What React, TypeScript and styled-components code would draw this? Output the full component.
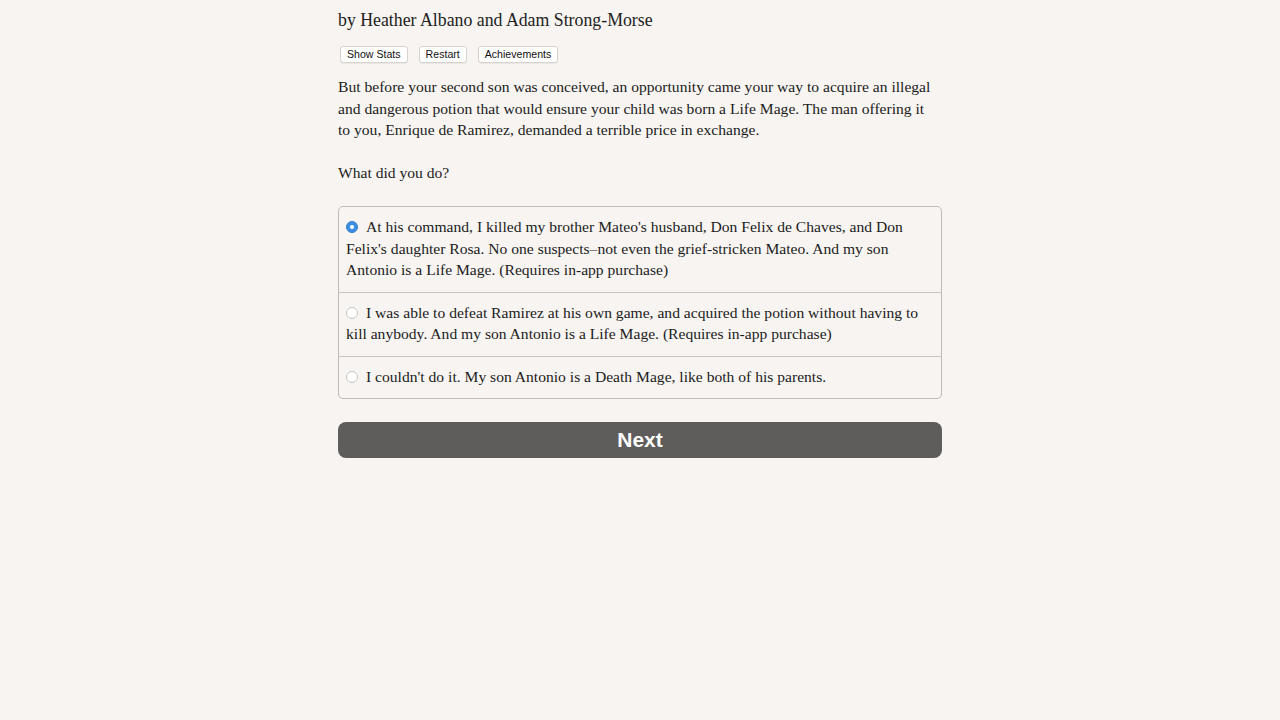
import React, { useState } from "react";
import styled, { createGlobalStyle } from "styled-components";

const Global = createGlobalStyle`
  html, body { margin: 0; padding: 0; background: #f7f4f1; }
  body { font-family: "Liberation Serif", "Times New Roman", serif; color: #1c1c1c; }
`;

const Page = styled.div`
  width: 604px;
  margin: 0 auto;
  padding-top: 9px;
`;

const Title = styled.div`
  font-size: 17.8px;
  line-height: 22px;
  color: #222;
`;

const ButtonRow = styled.div`
  display: flex;
  gap: 11px;
  margin-top: 15px;
  padding-left: 2px;
`;

const SmallButton = styled.button`
  font-family: "Liberation Sans", Arial, sans-serif;
  font-size: 10.6px;
  line-height: 15px;
  height: 17px;
  padding: 0 6px;
  background: #fff;
  border: 1px solid #d6d3cf;
  border-radius: 3px;
  color: #111;
  box-shadow: 0 1px 1px rgba(0,0,0,0.06);
`;

const Para = styled.p`
  font-size: 15.6px;
  line-height: 21.5px;
  margin: 13px 0 0;
  padding-right: 6px;
`;

const Question = styled.p`
  font-size: 15.6px;
  line-height: 21.5px;
  margin: 21px 0 0;
`;

const ChoiceBox = styled.div`
  margin-top: 23px;
  border: 1px solid #bdbab7;
  border-radius: 5px;
  overflow: hidden;
`;

const Choice = styled.label<{ $first?: boolean }>`
  display: block;
  padding: 9px 8px 11px 7px;
  font-size: 15.6px;
  line-height: 21.5px;
  border-top: ${(p) => (p.$first ? "none" : "1px solid #c9c6c3")};
  cursor: pointer;
`;

const Radio = styled.span<{ $checked: boolean }>`
  display: inline-block;
  width: 12px;
  height: 12px;
  box-sizing: border-box;
  border-radius: 50%;
  vertical-align: -1px;
  margin-right: 8px;
  background: ${(p) => (p.$checked ? "#3d8fe0" : "#fff")};
  border: ${(p) => (p.$checked ? "1px solid #2f7fd1" : "1px solid #c8c5c2")};
  position: relative;
  &::after {
    content: "";
    display: ${(p) => (p.$checked ? "block" : "none")};
    position: absolute;
    left: 3px;
    top: 3px;
    width: 4px;
    height: 4px;
    border-radius: 50%;
    background: #fff;
  }
`;

const NextButton = styled.button`
  display: block;
  width: 100%;
  height: 36px;
  margin-top: 23px;
  background: #5f5d5b;
  color: #fff;
  border: none;
  border-radius: 8px;
  font-family: "Liberation Sans", Arial, sans-serif;
  font-weight: bold;
  font-size: 21px;
  line-height: 36px;
  padding: 0;
`;

const choices = [
  "At his command, I killed my brother Mateo's husband, Don Felix de Chaves, and Don Felix's daughter Rosa. No one suspects\u2013not even the grief-stricken Mateo. And my son Antonio is a Life Mage. (Requires in-app purchase)",
  "I was able to defeat Ramirez at his own game, and acquired the potion without having to kill anybody. And my son Antonio is a Life Mage. (Requires in-app purchase)",
  "I couldn't do it. My son Antonio is a Death Mage, like both of his parents.",
];

export default function App() {
  const [sel, setSel] = useState(0);
  return (
    <>
      <Global />
      <Page>
        <Title>by Heather Albano and Adam Strong-Morse</Title>
        <ButtonRow>
          <SmallButton>Show Stats</SmallButton>
          <SmallButton>Restart</SmallButton>
          <SmallButton>Achievements</SmallButton>
        </ButtonRow>
        <Para>
          But before your second son was conceived, an opportunity came your way to acquire an illegal and
          dangerous potion that would ensure your child was born a Life Mage. The man offering it to you,
          Enrique de Ramirez, demanded a terrible price in exchange.
        </Para>
        <Question>What did you do?</Question>
        <ChoiceBox>
          {choices.map((c, i) => (
            <Choice key={i} $first={i === 0} onClick={() => setSel(i)}>
              <Radio $checked={sel === i} />
              {c}
            </Choice>
          ))}
        </ChoiceBox>
        <NextButton>Next</NextButton>
      </Page>
    </>
  );
}
